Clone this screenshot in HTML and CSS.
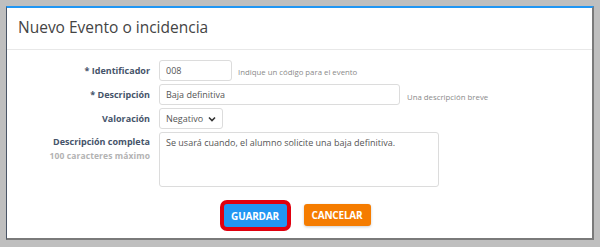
FILE: index.html
```html
<!DOCTYPE html>
<html lang="es">
<head>
    <meta charset="UTF-8">
    <title>Nuevo Evento o incidencia</title>
    <link rel="stylesheet" href="styles.css">
</head>
<body>

<div class="modal">
    <div class="modal-header">
        <h3>Nuevo Evento o incidencia</h3>
    </div>

    <form class="modal-body">
        <!-- Identificador -->
        <div class="row">
            <label class="lbl" for="ident">* Identificador</label>
            <input type="text" id="ident" class="inp inp-short" value="008">
            <span class="help">Indique un código para el evento</span>
        </div>

        <div class="row">
            <label class="lbl" for="desc">* Descripción</label>
            <input type="text" id="desc" class="inp inp-long" value="Baja definitiva">
            <span class="help help-low">Una descripción breve</span>
        </div>

        <div class="row">
            <label class="lbl" for="valor">Valoración</label>
            <div class="select">
                <span>Negativo</span>
                <svg width="8" height="6" viewBox="0 0 8 6"><path d="M1 1.5 L4 4.5 L7 1.5" fill="none" stroke="#333" stroke-width="1.6"/></svg>
            </div>
        </div>

        <div class="row row-top">
            <div class="lbl lbl-stack">
                <span>Descripción completa</span>
                <span class="sub">100 caracteres máximo</span>
            </div>
            <div class="area">Se usará cuando, el alumno solicite una baja definitiva.</div>
        </div>

        <div class="buttons">
            <button type="button" class="btn btn-save">GUARDAR</button>
            <button type="button" class="btn btn-cancel">CANCELAR</button>
        </div>
    </form>
</div>

</body>
</html>
```

FILE: styles.css
```css
body {
    margin: 0;
    background-color: #bfbfbf;
    font-family: "Open Sans", "Liberation Sans", sans-serif;
}
.modal {
    margin: 6px 6px 0 6px;
    height: 230px;
    background-color: #fff;
    border-top: 2px solid #2196f3;
    border-left: 1px solid #4a5566;
    border-right: 2px solid #7a7a7a;
    border-bottom: 2px solid #7a7a7a;
}
.modal-header {
    height: 42px;
    border-bottom: 1px solid #e8e8e8;
    display: flex;
    align-items: center;
    padding-left: 11px;
    box-sizing: border-box;
    padding-bottom: 3px;
}
.modal-header h3 {
    margin: 0;
    font-size: 15.5px;
    font-weight: normal;
    color: #444;
}
.modal-body {
    padding-top: 10px;
}
.row {
    display: flex;
    align-items: center;
    margin-bottom: 3px;
}
.row-top {
    align-items: flex-start;
    margin-top: 1px;
}
.lbl {
    flex: 0 0 143px;
    margin-right: 9px;
    text-align: right;
    font-size: 9px;
    font-weight: bold;
    color: #46546a;
}
.lbl-stack {
    display: flex;
    flex-direction: column;
    align-items: flex-end;
    padding-top: 3px;
}
.lbl-stack .sub {
    font-size: 8.5px;
    letter-spacing: 0.1px;
    color: #b3b3b3;
    margin-top: 2px;
}
.inp {
    box-sizing: border-box;
    height: 21px;
    border: 1px solid #dcdcdc;
    border-radius: 3px;
    padding: 0 6px;
    font-family: inherit;
    font-size: 9px;
    color: #555;
}
.inp-short {
    width: 73px;
}
.inp-long {
    width: 241px;
}
.help {
    margin-left: 6px;
    font-size: 7.8px;
    color: #8a8a8a;
    padding-top: 3px;
}
.help-low {
    padding-top: 5px;
    margin-left: 7px;
}
.select {
    box-sizing: border-box;
    width: 64px;
    height: 21px;
    border: 1px solid #dcdcdc;
    border-radius: 3px;
    padding: 0 6px;
    display: flex;
    align-items: center;
    justify-content: space-between;
    font-size: 9px;
    color: #555;
}
.area {
    box-sizing: border-box;
    width: 280px;
    height: 55px;
    border: 1px solid #dcdcdc;
    border-radius: 3px;
    padding: 3px 6px;
    font-size: 9px;
    color: #555;
}
.buttons {
    display: flex;
    justify-content: center;
    gap: 17px;
    margin-top: 17px;
    padding-right: 5px;
}
.btn {
    height: 23px;
    border: none;
    border-radius: 3px;
    color: #fff;
    font-family: inherit;
    font-size: 10px;
    font-weight: bold;
    letter-spacing: -0.2px;
    cursor: pointer;
}
.btn-save {
    width: 63px;
    background-color: #2196f3;
    box-shadow: 0 0 0 4px #e0000f;
}
.btn-cancel {
    width: 67px;
    height: 22px;
    background-color: #f57c00;
    box-shadow: 0 1px 3px rgba(0, 0, 0, 0.2);
}
```
